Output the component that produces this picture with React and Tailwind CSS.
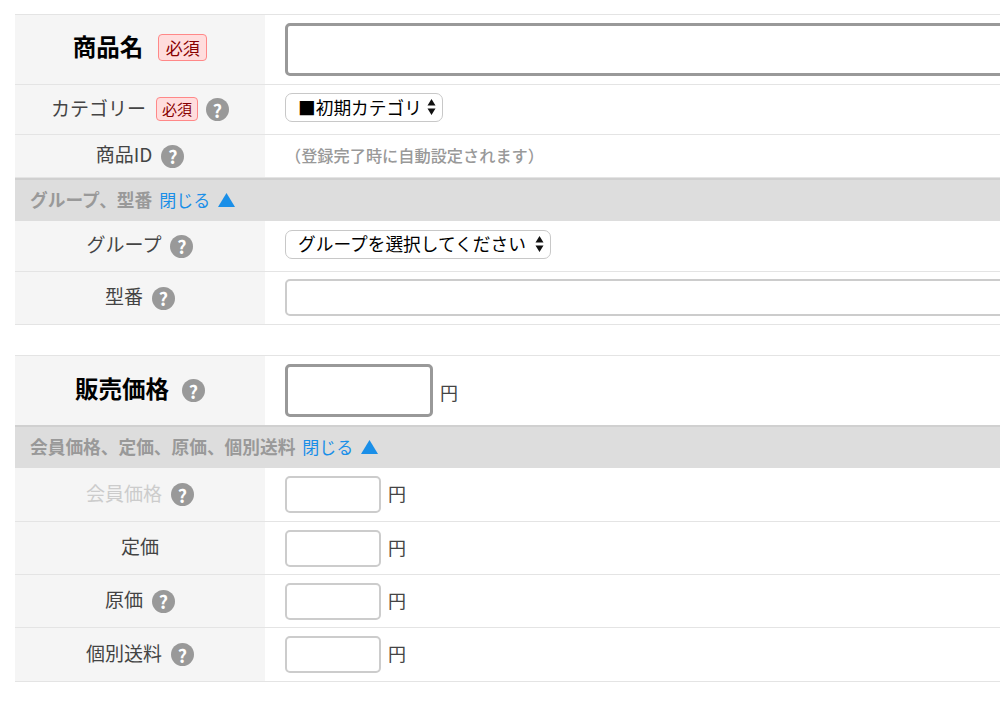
const jp = { fontFamily: '"Noto Sans CJK JP", "Noto Sans", sans-serif' };

function Help({ className = "" }) {
  return (
    <span className={"inline-flex h-[23px] w-[23px] shrink-0 items-center justify-center rounded-full bg-[#999] text-[18px] font-bold leading-none text-white " + className}>
      ?
    </span>
  );
}

function Required({ big }) {
  return (
    <span
      className={
        big
          ? "inline-flex h-[27px] w-[49px] items-center justify-center rounded-[4px] border border-[#f88] bg-[#fdd] pb-[1px] text-[17px] leading-none text-[#800]"
          : "inline-flex h-[24px] w-[42px] items-center justify-center rounded-[4px] border border-[#f88] bg-[#fdd] pb-[1px] text-[15px] leading-none text-[#800]"
      }
    >
      必須
    </span>
  );
}

function Row({ height, label, children }) {
  return (
    <div className="flex border-b border-[#e4e4e4]" style={{ height }}>
      <div className="flex w-[250px] shrink-0 items-center justify-center bg-[#f5f5f5] text-[19px] text-[#444]">
        {label}
      </div>
      <div className="flex flex-1 items-center pl-[20px]">{children}</div>
    </div>
  );
}

function Band({ label }) {
  return (
    <div className="flex h-[43px] items-center border-t-2 border-[#d0d0d0] bg-[#ddd] pb-[2px] pl-[15px]">
      <span className="text-[17.7px] font-bold text-[#999]">{label}</span>
      <span className="ml-[7px] text-[17px] text-[#1a8fe8]">閉じる</span>
      <svg className="ml-[8px]" width="17" height="14" viewBox="0 0 17 14">
        <path d="M8.5 0 L17 14 L0 14 Z" fill="#1a8fe8" />
      </svg>
    </div>
  );
}

function Select({ width, children }) {
  return (
    <div className="relative mb-[4px]" style={{ width }}>
      <select className="h-[29px] w-full appearance-none rounded-[7px] border border-[#c8c8c8] bg-white pl-[12px] text-[17.7px] leading-none text-black" style={jp}>
        <option>{children}</option>
      </select>
      <svg className="absolute right-[7px] top-[6px]" width="9" height="16" viewBox="0 0 9 16">
        <path d="M4.5 0 L8.5 6.5 L0.5 6.5 Z M4.5 16 L8.5 9.5 L0.5 9.5 Z" fill="#111" />
      </svg>
    </div>
  );
}

function Price() {
  return (
    <div className="flex items-center">
      <input className="h-[37px] w-[96px] rounded-[5px] border-2 border-[#ccc] bg-white" />
      <span className="mb-[2px] ml-[7px] text-[18px] text-[#444]">円</span>
    </div>
  );
}

function Text({ children }) {
  return <span className="mb-[3px]">{children}</span>;
}

function HelpLabel({ text, className = "" }) {
  return (
    <span className={"flex items-center " + className}>
      <Text>{text}</Text>
      <Help className="ml-[9px]" />
    </span>
  );
}

export default function App() {
  return (
    <div className="h-[703px] w-[1000px] overflow-hidden bg-white pl-[15px] pt-[14px]" style={jp}>
      <div className="border-t border-[#e4e4e4]">
        <Row
          height={70}
          label={
            <span className="mb-[4px] flex items-center text-[23.5px] font-bold text-black">
              <span className="mb-[2px]">商品名</span>
              <span className="ml-[15px] flex font-normal"><Required big /></span>
            </span>
          }
        >
          <input className="h-[53px] w-[800px] shrink-0 rounded-[5px] border-[3px] border-[#999] bg-white" />
        </Row>
        <Row
          height={50}
          label={
            <span className="flex items-center">
              <Text>カテゴリー</Text>
              <span className="mb-[1px] ml-[10px] flex"><Required /></span>
              <Help className="ml-[8px]" />
            </span>
          }
        >
          <Select width={158}>■初期カテゴリ</Select>
        </Row>
        <Row height={43} label={<HelpLabel text="商品ID" />}>
          <span className="mb-[2px] text-[16.2px] font-medium text-[#999]">（登録完了時に自動設定されます）</span>
        </Row>
        <Band label="グループ、型番" />
        <Row height={51} label={<HelpLabel text="グループ" />}>
          <Select width={266}>グループを選択してください</Select>
        </Row>
        <Row height={53} label={<HelpLabel text="型番" />}>
          <input className="mb-[2px] h-[37px] w-[800px] shrink-0 rounded-[5px] border-2 border-[#ccc] bg-white" />
        </Row>
      </div>

      <div className="mt-[30px] border-t border-[#e4e4e4]">
        <div className="flex h-[69px]">
          <div className="flex w-[250px] shrink-0 items-center justify-center bg-[#f5f5f5]">
            <span className="flex items-center text-[23.5px] font-bold text-black">
              <span className="mb-[3px]">販売価格</span>
              <Help className="ml-[13px]" />
            </span>
          </div>
          <div className="flex flex-1 items-center pl-[20px]">
            <input className="h-[53px] w-[148px] rounded-[5px] border-[3px] border-[#999] bg-white" />
            <span className="ml-[7px] mt-[4px] text-[18px] text-[#444]">円</span>
          </div>
        </div>
        <Band label="会員価格、定価、原価、個別送料" />
        <Row height={54} label={<HelpLabel text="会員価格" className="text-[#ccc]" />}>
          <Price />
        </Row>
        <Row height={53} label={<Text>定価</Text>}>
          <Price />
        </Row>
        <Row height={53} label={<HelpLabel text="原価" />}>
          <Price />
        </Row>
        <Row height={54} label={<HelpLabel text="個別送料" />}>
          <Price />
        </Row>
      </div>
    </div>
  );
}
